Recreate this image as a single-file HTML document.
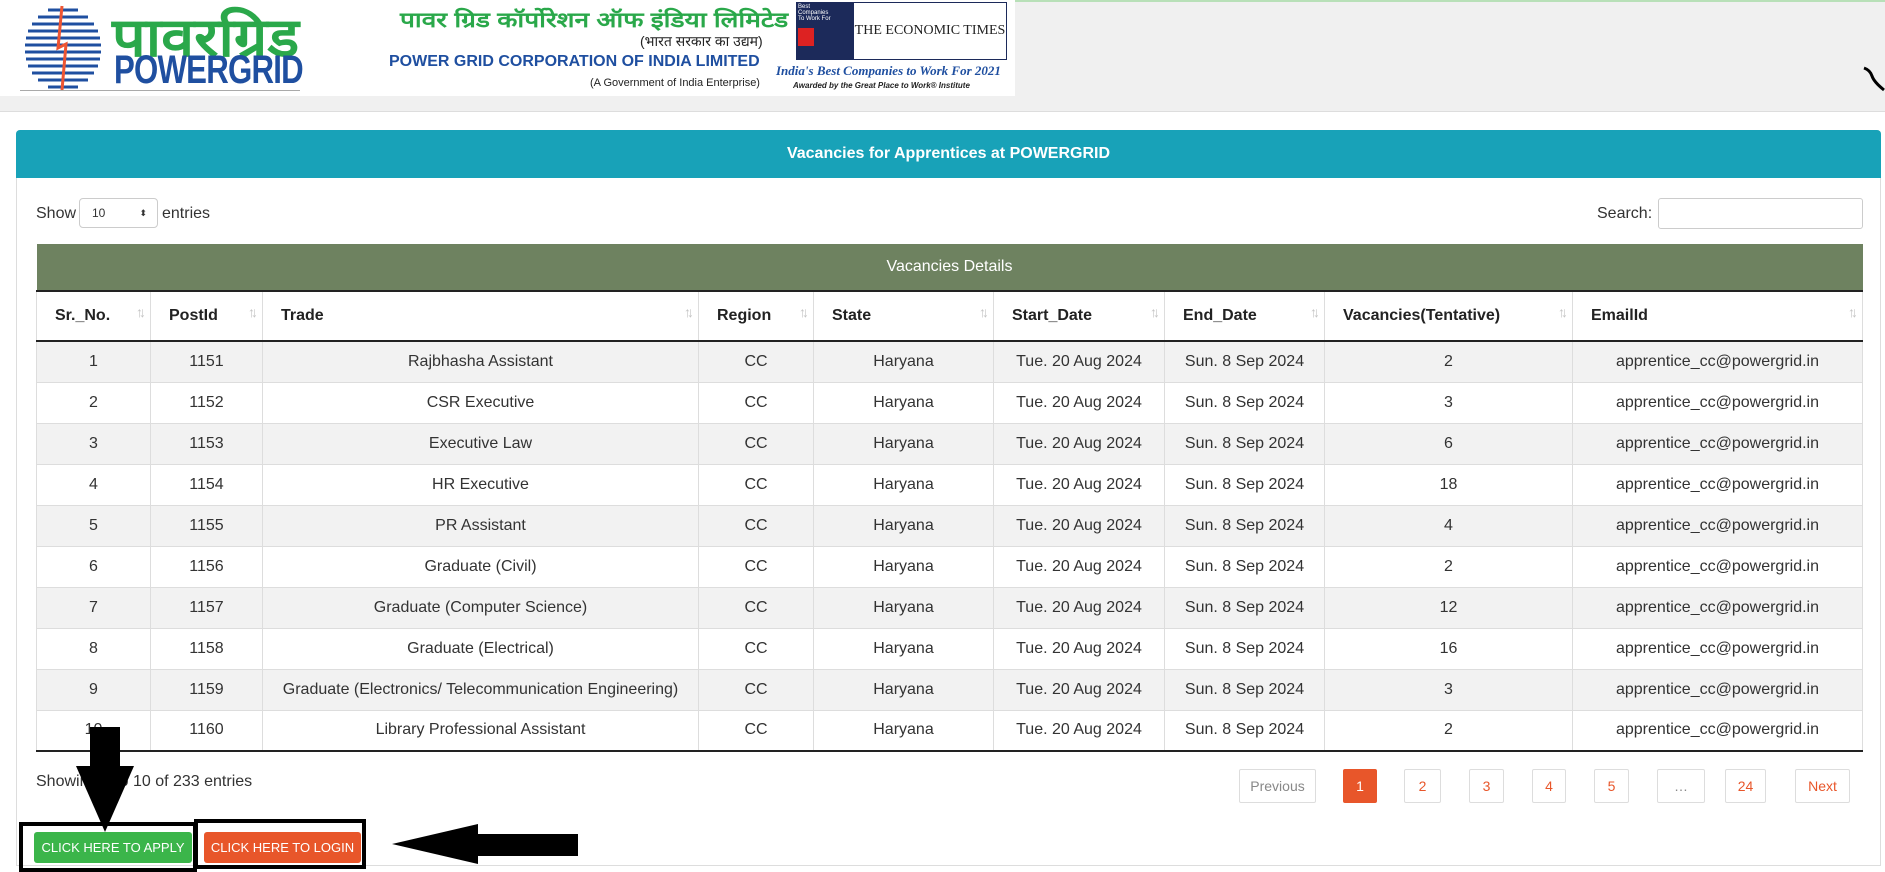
<!DOCTYPE html>
<html><head><meta charset="utf-8"><style>
*{box-sizing:border-box;margin:0;padding:0}
body{width:1885px;height:866px;overflow:hidden;background:#fff;font-family:"Liberation Sans","Noto Sans CJK SC",sans-serif;color:#333;position:relative}
.abs{position:absolute}
.hdr{left:0;top:0;width:1885px;height:112px;background:#f0f0f0;border-top:2px solid #b8e0b8;border-bottom:1px solid #ddd}
.banner{left:0;top:0;width:1015px;height:96px;background:#fff}
.card{left:16px;top:130px;width:1865px;height:736px;border:1px solid #ddd;border-radius:4px 4px 0 0}
.teal{left:16px;top:130px;width:1865px;height:48px;background:#18a2b8;color:#fff;font-weight:bold;font-size:16px;text-align:center;line-height:48px;border-radius:4px 4px 0 0}
table{position:absolute;left:36px;top:244px;width:1827px;border-collapse:collapse;font-size:16px}
th,td{border-left:1px solid #ddd;border-right:1px solid #ddd;text-align:center}
.gh{background:#6e8260;color:#fff;font-weight:normal;height:47px;border:none}
.ch th{height:50px;border-top:2px solid #222;border-bottom:2px solid #222;text-align:left;padding-left:18px;font-weight:bold;color:#222;position:relative}
.ch th::after{content:"↑↓";position:absolute;right:8px;top:12px;font-size:14px;color:#c4c4c4;letter-spacing:-4px;font-weight:normal}
td{height:41px;border-bottom:1px solid #ddd}
tr.o td{background:#f2f2f2}
tbody tr:last-child td{border-bottom:2px solid #222}
.pg{top:769px;height:34px;border:1px solid #ddd;border-radius:2px;color:#e8562a;font-size:14px;text-align:center;line-height:32px}
.btn{top:832px;height:31px;color:#fff;font-size:13px;text-align:center;line-height:31px;border-radius:3px;white-space:nowrap}
</style></head><body>
<div class="abs hdr"></div>
<div class="abs banner">
 <svg class="abs" style="left:18px;top:4px" width="90" height="88" viewBox="0 0 90 88">
  <g stroke="#1f4fa0" stroke-width="3">
   <line x1="30" y1="6" x2="60" y2="6"/><line x1="20" y1="13" x2="70" y2="13"/><line x1="14" y1="20" x2="76" y2="20"/><line x1="10" y1="27" x2="80" y2="27"/><line x1="8" y1="34" x2="82" y2="34"/><line x1="7" y1="41" x2="83" y2="41"/><line x1="7" y1="48" x2="83" y2="48"/><line x1="8" y1="55" x2="82" y2="55"/><line x1="10" y1="62" x2="80" y2="62"/><line x1="14" y1="69" x2="76" y2="69"/><line x1="20" y1="76" x2="70" y2="76"/><line x1="30" y1="83" x2="60" y2="83"/>
  </g>
  <path d="M44 2 L40 44 L48 40 L44 86" stroke="#e53" stroke-width="3" fill="none"/>
 </svg>
 <div class="abs" style="left:112px;top:-2px;font-size:54px;font-weight:bold;color:#2aa84a;transform:scaleX(1.1);transform-origin:left">पावरग्रिड</div>
 <div class="abs" style="left:114px;top:48px;font-size:40px;font-weight:bold;color:#1f4fa0;letter-spacing:-1px;transform:scaleX(.78);transform-origin:left">POWERGRID</div>
 <div class="abs" style="left:20px;top:90px;width:280px;height:1px;background:#aaa"></div>
 <div class="abs" style="left:400px;top:6px;font-size:21px;font-weight:bold;color:#2aa84a;transform:scaleX(1.25);transform-origin:left">पावर ग्रिड कॉर्पोरेशन ऑफ इंडिया लिमिटेड</div>
 <div class="abs" style="left:640px;top:32px;font-size:14px;color:#222">(भारत सरकार का उद्यम)</div>
 <div class="abs" style="left:389px;top:53px;font-size:16px;font-weight:bold;color:#1f4fa0;transform:scaleX(1.0);transform-origin:left">POWER GRID CORPORATION OF INDIA LIMITED</div>
 <div class="abs" style="left:590px;top:77px;font-size:11px;color:#222">(A Government of India Enterprise)</div>
 <div class="abs" style="left:796px;top:2px;width:57px;height:58px;background:#1c2a5a;color:#fff;font-size:6px;padding:2px">Best<br>Companies<br>To Work For<div style="background:#d22;width:16px;height:18px;margin-top:6px"></div></div>
 <div class="abs" style="left:853px;top:2px;width:154px;height:58px;border:1px solid #1c2a5a;font-family:'Liberation Serif',serif;font-size:14px;color:#222;text-align:center;line-height:56px">THE ECONOMIC TIMES</div>
 <div class="abs" style="left:776px;top:63px;font-family:'Liberation Serif',serif;font-style:italic;font-weight:bold;font-size:13px;color:#1f4fa0">India's Best Companies to Work For 2021</div>
 <div class="abs" style="left:793px;top:81px;font-size:8px;font-style:italic;font-weight:bold;color:#222">Awarded by the Great Place to Work® Institute</div>
</div>
<svg class="abs" style="left:1862px;top:64px" width="23" height="30"><path d="M2 4 Q8 6 10 12 T22 26" stroke="#000" stroke-width="3" fill="none"/></svg>

<div class="abs card"></div>
<div class="abs teal">Vacancies for Apprentices at POWERGRID</div>
<div class="abs" style="left:36px;top:205px;font-size:16px">Show</div>
<div class="abs" style="left:79px;top:198px;width:79px;height:30px;border:1px solid #ccc;border-radius:4px;font-size:12px;line-height:28px;padding-left:12px">10<span style="position:absolute;right:10px;font-size:9px;line-height:28px">⬍</span></div>
<div class="abs" style="left:162px;top:205px;font-size:16px">entries</div>
<div class="abs" style="left:1597px;top:205px;font-size:16px">Search:</div>
<div class="abs" style="left:1658px;top:198px;width:205px;height:31px;border:1px solid #ccc;border-radius:3px"></div>

<table>
<tr><th colspan="9" class="gh">Vacancies Details</th></tr>
<tr class="ch"><th style="width:114px">Sr._No.</th><th style="width:112px">PostId</th><th style="width:436px">Trade</th><th style="width:115px">Region</th><th style="width:180px">State</th><th style="width:171px">Start_Date</th><th style="width:160px">End_Date</th><th style="width:248px">Vacancies(Tentative)</th><th>EmailId</th></tr>
<tbody>
<tr class="o"><td>1</td><td>1151</td><td>Rajbhasha Assistant</td><td>CC</td><td>Haryana</td><td>Tue. 20 Aug 2024</td><td>Sun. 8 Sep 2024</td><td>2</td><td>apprentice_cc@powergrid.in</td></tr>
<tr><td>2</td><td>1152</td><td>CSR Executive</td><td>CC</td><td>Haryana</td><td>Tue. 20 Aug 2024</td><td>Sun. 8 Sep 2024</td><td>3</td><td>apprentice_cc@powergrid.in</td></tr>
<tr class="o"><td>3</td><td>1153</td><td>Executive Law</td><td>CC</td><td>Haryana</td><td>Tue. 20 Aug 2024</td><td>Sun. 8 Sep 2024</td><td>6</td><td>apprentice_cc@powergrid.in</td></tr>
<tr><td>4</td><td>1154</td><td>HR Executive</td><td>CC</td><td>Haryana</td><td>Tue. 20 Aug 2024</td><td>Sun. 8 Sep 2024</td><td>18</td><td>apprentice_cc@powergrid.in</td></tr>
<tr class="o"><td>5</td><td>1155</td><td>PR Assistant</td><td>CC</td><td>Haryana</td><td>Tue. 20 Aug 2024</td><td>Sun. 8 Sep 2024</td><td>4</td><td>apprentice_cc@powergrid.in</td></tr>
<tr><td>6</td><td>1156</td><td>Graduate (Civil)</td><td>CC</td><td>Haryana</td><td>Tue. 20 Aug 2024</td><td>Sun. 8 Sep 2024</td><td>2</td><td>apprentice_cc@powergrid.in</td></tr>
<tr class="o"><td>7</td><td>1157</td><td>Graduate (Computer Science)</td><td>CC</td><td>Haryana</td><td>Tue. 20 Aug 2024</td><td>Sun. 8 Sep 2024</td><td>12</td><td>apprentice_cc@powergrid.in</td></tr>
<tr><td>8</td><td>1158</td><td>Graduate (Electrical)</td><td>CC</td><td>Haryana</td><td>Tue. 20 Aug 2024</td><td>Sun. 8 Sep 2024</td><td>16</td><td>apprentice_cc@powergrid.in</td></tr>
<tr class="o"><td>9</td><td>1159</td><td>Graduate (Electronics/ Telecommunication Engineering)</td><td>CC</td><td>Haryana</td><td>Tue. 20 Aug 2024</td><td>Sun. 8 Sep 2024</td><td>3</td><td>apprentice_cc@powergrid.in</td></tr>
<tr><td>10</td><td>1160</td><td>Library Professional Assistant</td><td>CC</td><td>Haryana</td><td>Tue. 20 Aug 2024</td><td>Sun. 8 Sep 2024</td><td>2</td><td>apprentice_cc@powergrid.in</td></tr>
</tbody></table>

<div class="abs" style="left:36px;top:773px;font-size:16px">Showing 1 to 10 of 233 entries</div>
<div class="abs pg" style="left:1239px;width:77px;color:#888">Previous</div>
<div class="abs pg" style="left:1343px;width:34px;background:#e8562a;border-color:#e8562a;color:#fff">1</div>
<div class="abs pg" style="left:1404px;width:37px">2</div>
<div class="abs pg" style="left:1469px;width:35px">3</div>
<div class="abs pg" style="left:1532px;width:34px">4</div>
<div class="abs pg" style="left:1594px;width:35px">5</div>
<div class="abs pg" style="left:1657px;width:48px;color:#888">…</div>
<div class="abs pg" style="left:1725px;width:41px">24</div>
<div class="abs pg" style="left:1795px;width:55px">Next</div>

<div class="abs" style="left:19px;top:822px;width:178px;height:50px;border:4px solid #000"></div>
<div class="abs" style="left:194px;top:819px;width:172px;height:50px;border:4px solid #000"></div>
<div class="abs btn" style="left:34px;width:158px;background:#3bb54a">CLICK HERE TO APPLY</div>
<div class="abs btn" style="left:204px;width:157px;background:#e8562a">CLICK HERE TO LOGIN</div>
<svg class="abs" style="left:0;top:720px" width="600" height="146">
 <rect x="90" y="7" width="30" height="42" fill="#000"/>
 <polygon points="76,46 134,46 105,112" fill="#000"/>
 <rect x="474" y="114" width="104" height="22" fill="#000"/>
 <polygon points="392,124 478,104 478,144" fill="#000"/>
</svg>
</body></html>
